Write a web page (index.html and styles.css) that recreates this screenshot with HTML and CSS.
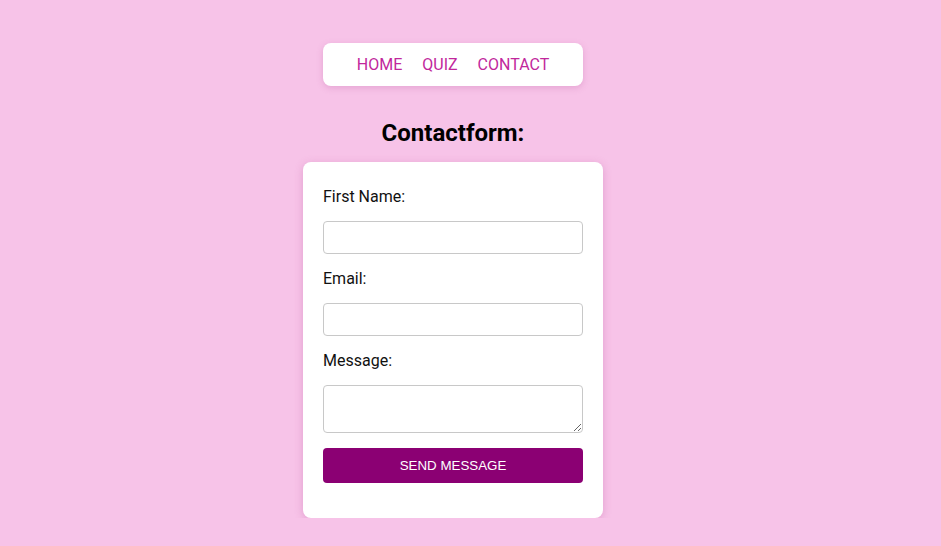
FILE: index.html
```html
<!DOCTYPE html>
<html lang="en">
<head>
<meta charset="utf-8">
<title>Contact</title>
<link rel="stylesheet" href="styles.css">
</head>
<body>
<main class="page">
  <nav class="nav">
    <a class="nav-link" href="#">HOME</a>
    <a class="nav-link" href="#">QUIZ</a>
    <a class="nav-link" href="#">CONTACT</a>
  </nav>
  <h1 class="title">Contactform:</h1>
  <form class="card">
    <label class="label" for="fn">First Name:</label>
    <input class="field" id="fn" type="text">
    <label class="label" for="em">Email:</label>
    <input class="field" id="em" type="email">
    <label class="label" for="msg">Message:</label>
    <textarea class="field area" id="msg"></textarea>
    <button class="send" type="button">SEND MESSAGE</button>
  </form>
</main>
</body>
</html>
```
FILE: styles.css
```css
html, body {
  margin: 0;
  padding: 0;
  background: #f7c3e8;
  font-family: Roboto, "Liberation Sans", sans-serif;
  color: #111;
}
.page {
  width: 906px;
  display: flex;
  flex-direction: column;
  align-items: center;
  padding-top: 43px;
}
.nav {
  width: 260px;
  height: 43px;
  box-sizing: border-box;
  background: #fff;
  border-radius: 8px;
  box-shadow: 0 2px 6px rgba(180, 80, 150, 0.25);
  display: flex;
  justify-content: center;
  align-items: center;
  gap: 20px;
}
.nav-link {
  color: #c1279c;
  text-decoration: none;
  font-size: 16px;
  line-height: 19px;
}
.title {
  margin: 33px 0 15px;
  font-size: 24px;
  line-height: 28px;
  font-weight: 700;
  color: #000;
}
.card {
  width: 300px;
  box-sizing: border-box;
  background: #fff;
  border-radius: 8px;
  box-shadow: 0 2px 8px rgba(180, 80, 150, 0.3);
  padding: 25px 20px 35px;
  display: flex;
  flex-direction: column;
}
.label {
  display: block;
  font-size: 16px;
  line-height: 19px;
  margin-bottom: 15px;
  color: #111;
}
.field {
  width: 260px;
  height: 33px;
  box-sizing: border-box;
  border: 1px solid #c8c8c8;
  border-radius: 4px;
  margin: 0 0 15px;
  padding: 6px 8px;
  font-family: inherit;
  font-size: 14px;
  background: #fff;
}
.area {
  height: 48px;
  margin-bottom: 15px;
  resize: vertical;
}
.send {
  width: 260px;
  height: 35px;
  border: none;
  border-radius: 4px;
  background: #8b0073;
  color: #fff;
  font-family: "Liberation Sans", Arial, sans-serif;
  font-size: 13.333px;
  line-height: 15px;
  padding: 0 0 1px;
  cursor: pointer;
}
```
